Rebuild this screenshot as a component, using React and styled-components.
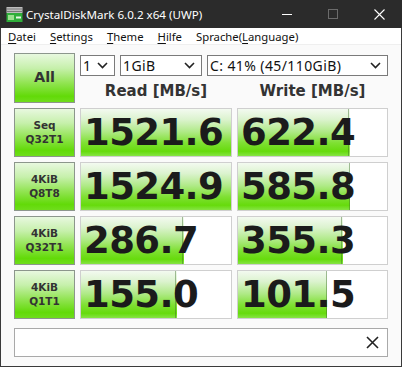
import React from 'react'
import styled, { createGlobalStyle } from 'styled-components'

const GlobalStyle = createGlobalStyle`
  html, body {
    margin: 0;
    padding: 0;
    background: #fff;
  }
  * { box-sizing: border-box; }
`

const results = [
  { top: 'Seq', bottom: 'Q32T1', read: '1521.6', readFill: 100, write: '622.4', writeFill: 75 },
  { top: '4KiB', bottom: 'Q8T8', read: '1524.9', readFill: 100, write: '585.8', writeFill: 75.5 },
  { top: '4KiB', bottom: 'Q32T1', read: '286.7', readFill: 68.7, write: '355.3', writeFill: 70.5 },
  { top: '4KiB', bottom: 'Q1T1', read: '155.0', readFill: 64, write: '101.5', writeFill: 60 },
]

const Window = styled.div`
  width: 402px;
  height: 367px;
  display: flex;
  flex-direction: column;
  border: 1px solid #3a3a3a;
  border-top: none;
  background: #fafafa;
`

const TitleBar = styled.div`
  height: 28px;
  flex: none;
  display: flex;
  align-items: center;
  background: #2b2b2b;
  color: #fff;
  font-family: "Noto Sans", "Open Sans", sans-serif;
  font-size: 11.6px;
  margin: 0 -1px;
`

const AppIcon = styled.div`
  width: 26px;
  display: flex;
  justify-content: center;
  padding-left: 2px;
`

const Title = styled.div`
  flex: 1;
  white-space: nowrap;
`

const WinButton = styled.div`
  width: 46px;
  height: 28px;
  display: flex;
  align-items: center;
  justify-content: center;
`

const MenuBar = styled.div`
  height: 17px;
  flex: none;
  display: flex;
  align-items: center;
  gap: 14px;
  padding-left: 7px;
  background: #fff;
  border-bottom: 1px solid #efefef;
  font-family: "Noto Sans", "Open Sans", sans-serif;
  font-size: 11.3px;
  color: #111;
`

const MenuItem = styled.span`
  white-space: nowrap;
  u { text-decoration: underline; text-underline-offset: 2px; }
`

const Content = styled.div`
  flex: 1;
  padding: 8px 13px 9px 13px;
  display: flex;
  flex-direction: column;
`

const Grid = styled.div`
  display: grid;
  grid-template-columns: 61px 152px 151px;
  grid-template-rows: 50px repeat(4, 49px);
  column-gap: 5px;
  row-gap: 5px;
`

const GreenButton = styled.div`
  display: flex;
  flex-direction: column;
  align-items: center;
  justify-content: center;
  border: 1px solid #8c968c;
  background: linear-gradient(to bottom, #e8f8df 0%, #c6f0ab 30%, #92e453 60%, #62da08 88%, #6fdd1c 100%);
  font-family: "DejaVu Sans", Verdana, sans-serif;
  font-weight: bold;
  color: #333;
  font-size: ${p => (p.$big ? '14.5px' : '10.5px')};
  line-height: 14px;
  padding-bottom: ${p => (p.$big ? '2px' : '1px')};
`

const TopControls = styled.div`
  grid-column: 2 / span 2;
  display: flex;
  flex-direction: column;
`

const SelectRow = styled.div`
  display: flex;
  gap: 5px;
  margin-top: 2px;
`

const Select = styled.div`
  width: ${p => p.$w}px;
  height: 21px;
  display: flex;
  align-items: center;
  justify-content: space-between;
  padding: 0 6px 0 2px;
  background: #fff;
  border: 1px solid #7a7a7a;
  font-family: "Noto Sans", "Open Sans", sans-serif;
  font-size: 14px;
  letter-spacing: 0.4px;
  color: #111;
  white-space: nowrap;
`

const Headers = styled.div`
  flex: 1;
  display: grid;
  grid-template-columns: 152px 151px;
  column-gap: 5px;
  align-items: center;
`

const Header = styled.div`
  text-align: center;
  font-family: "DejaVu Sans", Verdana, sans-serif;
  font-weight: bold;
  font-size: 15px;
  color: #333;
  padding-top: 3px;
`

const fillBar = 'linear-gradient(to bottom, #f3faf0 0%, #dcf3cf 22%, #b0ea88 48%, #7fe033 72%, #66db0c 90%, #86e444 100%)'

const ValueCell = styled.div`
  display: flex;
  align-items: center;
  padding-left: 3px;
  border: 1px solid #cfcfcf;
  background:
    linear-gradient(rgba(60, 110, 40, 0.45), rgba(60, 110, 40, 0.45)) calc(${p => p.$fill}% - 1px) 0 / ${p => (p.$fill >= 100 ? 0 : 1)}px 100% no-repeat,
    ${fillBar} 0 0 / ${p => p.$fill}% 100% no-repeat,
    #fff;
  font-family: "DejaVu Sans", Verdana, sans-serif;
  font-weight: bold;
  font-size: 37px;
  color: #1b1b1b;
  letter-spacing: -0.6px;
  overflow: hidden;
  white-space: nowrap;
`

const Comment = styled.div`
  margin-top: 9px;
  height: 29px;
  display: flex;
  align-items: center;
  justify-content: flex-end;
  padding-right: 8px;
  background: #fff;
  border: 1px solid #a9a9a9;
`

const Chevron = () => (
  <svg width="11" height="7" viewBox="0 0 11 7">
    <path d="M1 1 L5.5 5.5 L10 1" fill="none" stroke="#222" strokeWidth="1.6" />
  </svg>
)

const App = () => {
  return (
    <>
      <GlobalStyle />
      <Window>
        <TitleBar>
          <AppIcon>
            <svg width="17" height="17" viewBox="0 0 17 17">
              <rect x="0.5" y="1" width="16" height="6" fill="#bdbdbd" />
              <rect x="0.5" y="2.5" width="16" height="1" fill="#7a7a7a" />
              <rect x="0.5" y="5" width="16" height="1" fill="#7a7a7a" />
              <rect x="0.5" y="7" width="16" height="9" fill="#2fae3a" />
              <rect x="2" y="9" width="6" height="5" fill="#9be08f" />
              <rect x="10" y="10.5" width="5" height="2" fill="#e8f7e6" />
            </svg>
          </AppIcon>
          <Title>CrystalDiskMark 6.0.2 x64 (UWP)</Title>
          <WinButton>
            <svg width="10" height="10" viewBox="0 0 10 10">
              <path d="M0 5.5 H10" stroke="#fff" strokeWidth="1" />
            </svg>
          </WinButton>
          <WinButton>
            <svg width="10" height="10" viewBox="0 0 10 10">
              <rect x="0.5" y="0.5" width="9" height="9" fill="none" stroke="#6b6b6b" strokeWidth="1" />
            </svg>
          </WinButton>
          <WinButton>
            <svg width="11" height="11" viewBox="0 0 11 11">
              <path d="M0.5 0.5 L10.5 10.5 M10.5 0.5 L0.5 10.5" stroke="#fff" strokeWidth="1.1" />
            </svg>
          </WinButton>
        </TitleBar>
        <MenuBar>
          <MenuItem><u>D</u>atei</MenuItem>
          <MenuItem><u>S</u>ettings</MenuItem>
          <MenuItem><u>T</u>heme</MenuItem>
          <MenuItem><u>H</u>ilfe</MenuItem>
          <MenuItem>Sprache(<u>L</u>anguage)</MenuItem>
        </MenuBar>
        <Content>
          <Grid>
            <GreenButton $big>All</GreenButton>
            <TopControls>
              <SelectRow>
                <Select $w={35}>1<Chevron /></Select>
                <Select $w={82}>1GiB<Chevron /></Select>
                <Select $w={181}>C: 41% (45/110GiB)<Chevron /></Select>
              </SelectRow>
              <Headers>
                <Header>Read [MB/s]</Header>
                <Header>Write [MB/s]</Header>
              </Headers>
            </TopControls>
            {results.map((r, i) => (
              <React.Fragment key={i}>
                <GreenButton>
                  <span>{r.top}</span>
                  <span>{r.bottom}</span>
                </GreenButton>
                <ValueCell $fill={r.readFill}>{r.read}</ValueCell>
                <ValueCell $fill={r.writeFill}>{r.write}</ValueCell>
              </React.Fragment>
            ))}
          </Grid>
          <Comment>
            <svg width="13" height="13" viewBox="0 0 13 13">
              <path d="M1 1 L12 12 M12 1 L1 12" stroke="#222" strokeWidth="1.6" />
            </svg>
          </Comment>
        </Content>
      </Window>
    </>
  )
}

export default App
